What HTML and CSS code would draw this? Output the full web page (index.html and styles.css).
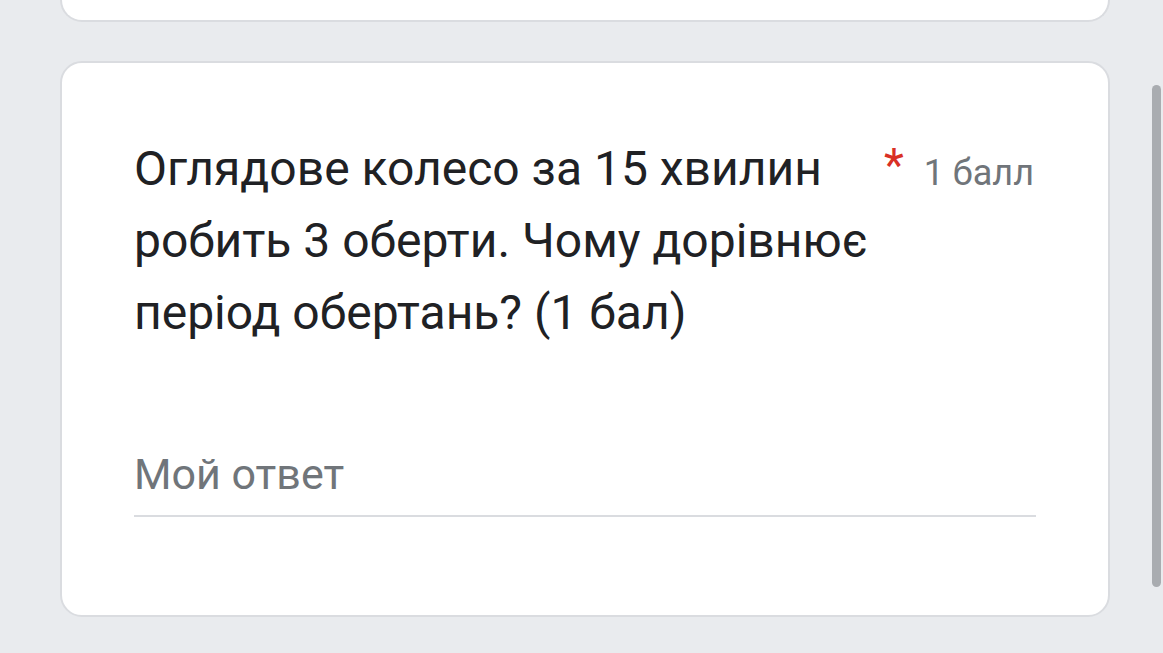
FILE: index.html
```html
<!DOCTYPE html>
<html lang="uk">
<head>
	<meta charset="UTF-8">
	<meta name="viewport" content="width=device-width">
	<title>Форма</title>
	<link rel="stylesheet" href="styles.css">
</head>
<body>
<div class="form">
	<div class="card card-prev"></div>

	<div class="card question">
		<div class="question-head">
			<div class="question-title">Оглядове колесо за 15 хвилин робить 3 оберти. Чому дорівнює період обертань? (1 бал)</div>
			<span class="required">*</span>
			<span class="points">1 балл</span>
		</div>
		<div class="answer">
			<input type="text" class="answer-input" placeholder="Мой ответ">
		</div>
	</div>
</div>
<div class="scrollbar"></div>
</body>
</html>
```

FILE: styles.css
```css
html { height: 100%; }

body {
	margin: 0;
	height: 100%;
	overflow: hidden;
	background-color: #e9ebee;
	font-family: Roboto, "Noto Sans", sans-serif;
	color: #202124;
}

.form {
	width: 1050px;
	margin-left: 60px;
	display: flex;
	flex-direction: column;
	gap: 39px;
}

.card {
	background-color: #fff;
	border: 2px solid #dadce0;
	border-radius: 22px;
	box-sizing: border-box;
}

.card-prev {
	height: 22px;
	border-top: none;
	border-radius: 0 0 22px 22px;
}

.question {
	height: 556px;
	padding: 70px 74px 0 72px;
}

.question-head {
	display: flex;
	align-items: flex-start;
}

.question-title {
	flex: 1;
	font-size: 48px;
	line-height: 72px;
	padding-right: 8px;
}

.required {
	color: #d93025;
	font-size: 46px;
	line-height: 64px;
	margin-right: 20px;
}

.points {
	color: #70757a;
	font-size: 36px;
	line-height: 80px;
}

.answer {
	margin-top: 97px;
	border-bottom: 2px solid #dadce0;
	padding-bottom: 13px;
	margin-right: -2px;
}

.answer-input {
	display: block;
	width: 100%;
	border: none;
	outline: none;
	padding: 0;
	margin: 0;
	font-family: Roboto, "Noto Sans", sans-serif;
	font-size: 43px;
	line-height: 56px;
	height: 56px;
	color: #202124;
	background: transparent;
}

.answer-input::placeholder { color: #70757a; }

.scrollbar {
	position: absolute;
	top: 85px;
	right: 2px;
	width: 9px;
	height: 502px;
	border-radius: 5px;
	background-color: #a9acb0;
}
```
